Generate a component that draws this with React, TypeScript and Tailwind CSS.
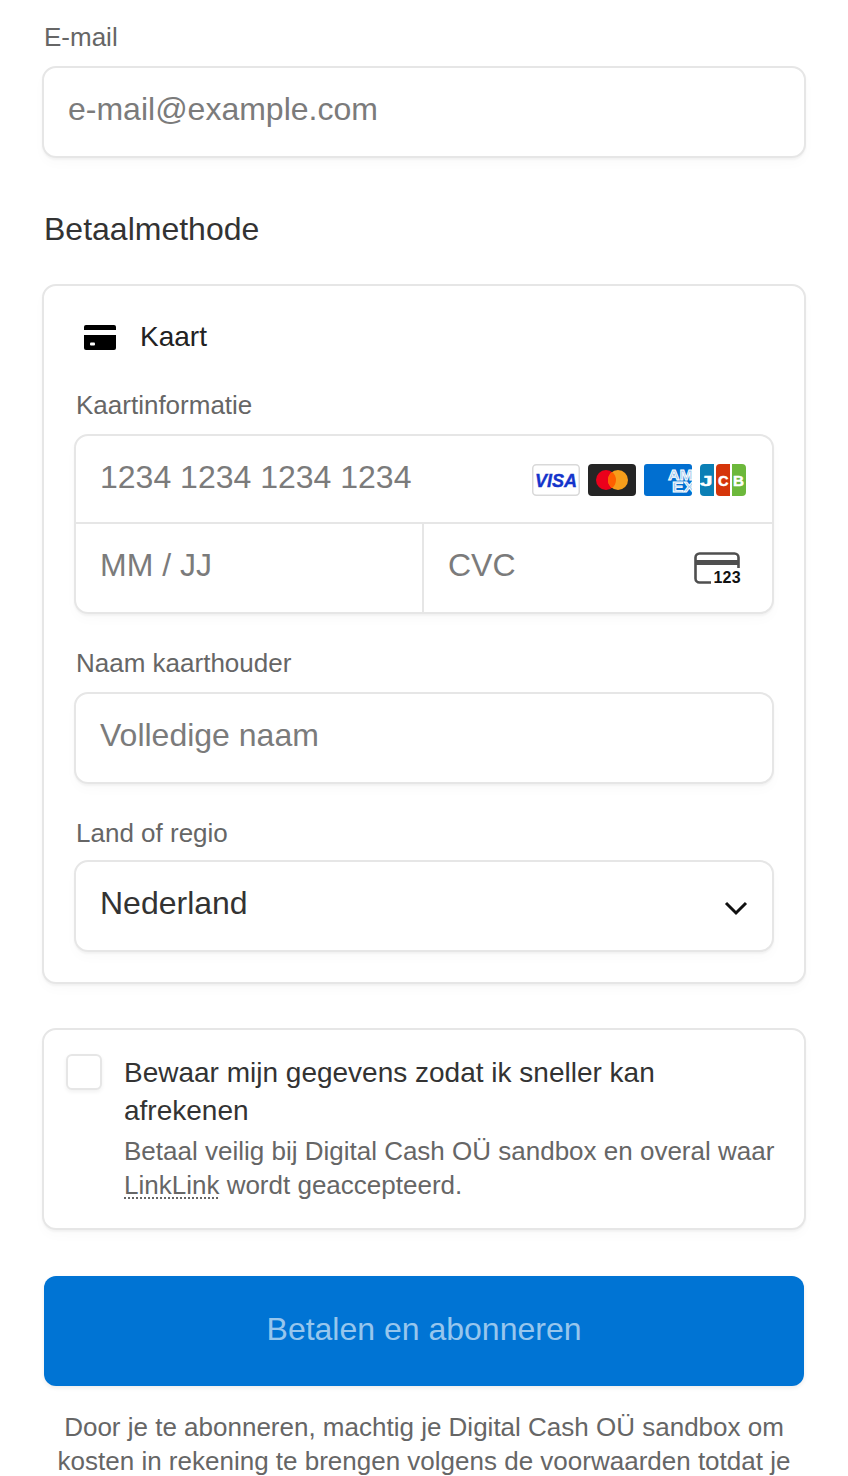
const font = "font-['Liberation_Sans',Arial,sans-serif]";
const box = "rounded-[14px] border-2 border-[#e6e6e6] bg-white shadow-[0_2px_2px_rgba(0,0,0,0.04),0_6px_12px_rgba(0,0,0,0.02)]";
const label = "block text-[26px] leading-[34px] text-[#666666]";
const ph = "text-[32px] leading-[40px] text-[#7b7b7b]";

function CardIcon() {
  return (
    <svg width="32" height="25" viewBox="0 0 32 25" className="block shrink-0">
      <path d="M2 0h28a2 2 0 0 1 2 2v3H0V2a2 2 0 0 1 2-2z" fill="#000" />
      <path d="M0 10h32v13a2 2 0 0 1-2 2H2a2 2 0 0 1-2-2z" fill="#000" />
      <rect x="6" y="17.5" width="5" height="3" rx="1" fill="#fff" />
    </svg>
  );
}

function Brands() {
  return (
    <div className="flex items-center gap-2">
      <svg width="48" height="32" viewBox="0 0 48 32" className="block">
        <rect x="0.75" y="0.75" width="46.5" height="30.5" rx="3.5" fill="#fff" stroke="#d9d9d9" strokeWidth="1.5" />
        <text x="3" y="23" textLength="42" lengthAdjust="spacingAndGlyphs" fontFamily="Liberation Sans" fontWeight="700" fontStyle="italic" fontSize="19" fill="#1434cb" stroke="#1434cb" strokeWidth="0.4">VISA</text>
      </svg>
      <svg width="48" height="32" viewBox="0 0 48 32" className="block">
        <rect width="48" height="32" rx="4" fill="#252525" />
        <circle cx="18" cy="16" r="10" fill="#eb001b" />
        <circle cx="30" cy="16" r="10" fill="#f79e1b" />
        <path d="M24 8a10 10 0 0 1 0 16a10 10 0 0 1 0-16z" fill="#ff5f00" />
      </svg>
      <svg width="48" height="32" viewBox="0 0 48 32" className="block">
        <rect width="48" height="32" rx="3" fill="#016fd0" />
        <text x="24" y="15.5" textLength="25" lengthAdjust="spacingAndGlyphs" fontFamily="Liberation Sans" fontWeight="700" fontSize="14" fill="#9cc6ec" stroke="#fff" strokeWidth="0.8">AM</text>
        <text x="28" y="27.5" textLength="23" lengthAdjust="spacingAndGlyphs" fontFamily="Liberation Sans" fontWeight="700" fontSize="14" fill="#9cc6ec" stroke="#fff" strokeWidth="0.8">EX</text>
      </svg>
      <svg width="46" height="32" viewBox="0 0 46 32" className="block">
        <path d="M4 0h10v32H4a4 4 0 0 1-4-4V4a4 4 0 0 1 4-4z" fill="#0b7fb5" />
        <path d="M20 0h10v32H20a4 4 0 0 1-4-4V4a4 4 0 0 1 4-4z" fill="#d5350a" />
        <path d="M32 0h10a4 4 0 0 1 4 4v24a4 4 0 0 1-4 4H32z" fill="#6cb83b" />
        <text x="0" y="21.5" textLength="12.5" lengthAdjust="spacingAndGlyphs" fontFamily="Liberation Sans" fontWeight="700" fontSize="15.5" fill="#fff" stroke="#fff" strokeWidth="0.5">J</text>
        <text x="18" y="21.5" textLength="10.5" lengthAdjust="spacingAndGlyphs" fontFamily="Liberation Sans" fontWeight="700" fontSize="15.5" fill="#fff" stroke="#fff" strokeWidth="0.5">C</text>
        <text x="33" y="21.5" textLength="11" lengthAdjust="spacingAndGlyphs" fontFamily="Liberation Sans" fontWeight="700" fontSize="15.5" fill="#fff" stroke="#fff" strokeWidth="0.5">B</text>
      </svg>
    </div>
  );
}

function CvcIcon() {
  return (
    <svg width="48" height="34" viewBox="0 0 48 34" className="block">
      <path d="M17 30.5H5.5a4 4 0 0 1-4-4v-21a4 4 0 0 1 4-4h35a4 4 0 0 1 4 4V16" fill="none" stroke="#4f4f4f" strokeWidth="2.6" />
      <rect x="1.5" y="8" width="43" height="5" fill="#4f4f4f" />
      <text x="47" y="31" textAnchor="end" fontFamily="Liberation Sans" fontWeight="700" fontSize="16" letterSpacing="0.3" fill="#111">123</text>
    </svg>
  );
}

export default function App() {
  return (
    <div className={`${font} h-[1476px] w-[848px] overflow-hidden bg-white px-[42px] pt-[20px] text-[#333333]`}>
      <span className={`${label} pl-[2px]`}>E-mail</span>
      <div className={`${box} mt-[12px] h-[92px] pl-[24px] pt-[21px] ${ph}`}>e-mail@example.com</div>

      <h2 className="mt-[51px] pl-[2px] text-[32px] font-normal leading-[40px]">Betaalmethode</h2>

      <div className={`${box} mt-[35px] h-[700px] px-[30px]`}>
        <div className="flex h-[72px] items-center pl-[10px] pt-[30px]">
          <CardIcon />
          <span className="ml-[24px] text-[28px] leading-[36px] text-[#222222]">Kaart</span>
        </div>
        <span className={`${label} mt-[30px] pl-[2px]`}>Kaartinformatie</span>
        <div className={`${box} mt-[12px] h-[180px]`}>
          <div className="flex h-[88px] items-center justify-between border-b-2 border-[#e6e6e6] pl-[24px] pr-[26px]">
            <span className={`${ph} -mt-[5px]`}>1234 1234 1234 1234</span>
            <div className="mt-[2px]"><Brands /></div>
          </div>
          <div className="flex h-[88px]">
            <div className={`w-[348px] border-r-2 border-[#e6e6e6] pl-[24px] pt-[21px] ${ph}`}>MM / JJ</div>
            <div className="flex flex-1 justify-between pl-[24px] pr-[30px]">
              <span className={`${ph} pt-[21px]`}>CVC</span>
              <div className="pt-[28px]"><CvcIcon /></div>
            </div>
          </div>
        </div>

        <span className={`${label} mt-[32px] pl-[2px]`}>Naam kaarthouder</span>
        <div className={`${box} mt-[12px] h-[92px] pl-[24px] pt-[21px] ${ph}`}>Volledige naam</div>

        <span className={`${label} mt-[32px] pl-[2px]`}>Land of regio</span>
        <div className={`${box} mt-[10px] flex h-[92px] items-start justify-between pl-[24px] pr-[24px] pt-[21px]`}>
          <span className="text-[32px] leading-[40px]">Nederland</span>
          <svg width="24" height="16" viewBox="0 0 24 16" className="mt-[17px] block">
            <path d="M2 3l10 10L22 3" fill="none" stroke="#111" strokeWidth="3" />
          </svg>
        </div>
      </div>

      <div className={`${box} mt-[44px] flex h-[202px] pl-[22px] pr-[26px] pt-[24px]`}>
        <div className="h-[36px] w-[36px] shrink-0 rounded-[6px] border-2 border-[#e6e6e6] bg-white shadow-[0_2px_4px_rgba(0,0,0,0.06)]" />
        <div className="ml-[22px]">
          <p className="text-[28px] leading-[38px]">Bewaar mijn gegevens zodat ik sneller kan afrekenen</p>
          <p className="mt-[4px] text-[26px] leading-[34px] text-[#666666]">
            Betaal veilig bij Digital Cash OÜ sandbox en overal waar{" "}
            <span className="underline decoration-dotted decoration-2 underline-offset-[3px]">LinkLink</span> wordt geaccepteerd.
          </p>
        </div>
      </div>

      <button className="mx-[2px] mt-[46px] flex h-[110px] w-[760px] items-center justify-center rounded-[12px] bg-[#0074d4] pb-[4px] text-[32px] text-white/60 shadow-[0_2px_4px_rgba(0,0,0,0.08)]">
        Betalen en abonneren
      </button>

      <p className="mt-[24px] text-center text-[26px] leading-[34px] text-[#666666]">
        Door je te abonneren, machtig je Digital Cash OÜ sandbox om kosten in rekening te brengen volgens de voorwaarden totdat je
      </p>
    </div>
  );
}
